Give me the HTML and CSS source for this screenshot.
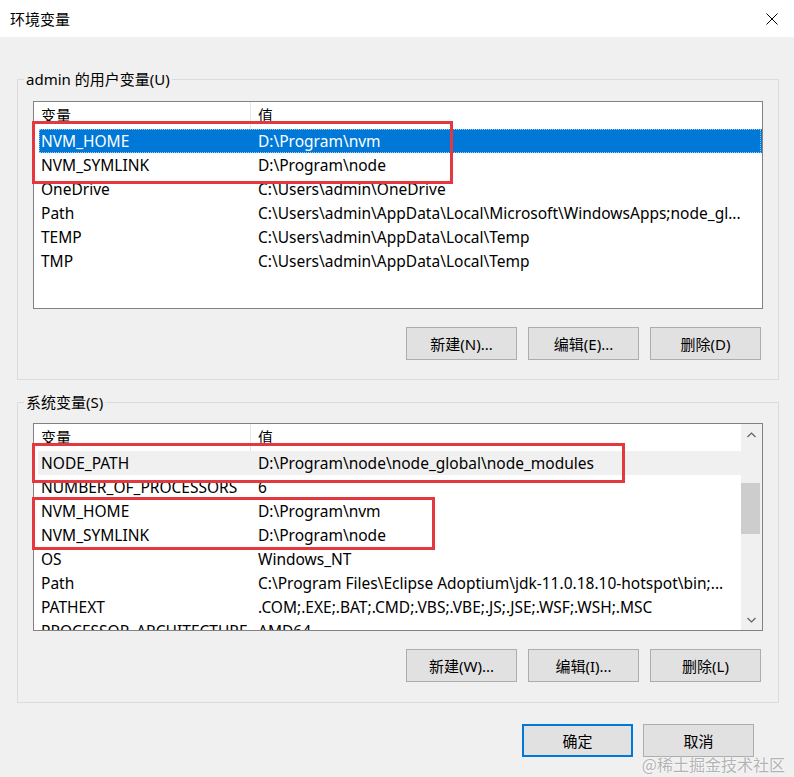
FILE: index.html
```html
<!DOCTYPE html>
<html lang="zh-CN">

<head>
  <meta charset="UTF-8">
  <meta name="viewport" content="width=device-width, initial-scale=1.0">
  <link rel="stylesheet" href="styles.css">
  <title>环境变量</title>
</head>

<body>
  <div class="dialog">
    <header class="titlebar">
      <span class="title">环境变量</span>
      <button class="close" aria-label="关闭">
        <svg width="12" height="12" viewBox="0 0 12 12"><path d="M0.5 0.5 L11.5 11.5 M11.5 0.5 L0.5 11.5" stroke="#000" stroke-width="1" fill="none"/></svg>
      </button>
    </header>

    <main class="body">
      <fieldset class="group group-user">
        <legend>admin 的用户变量(U)</legend>
        <div class="list">
          <div class="view">
            <div class="table">
              <div class="head"><span>变量</span><span>值</span></div>
              <div class="row selected"><span>NVM_HOME</span><span>D:\Program\nvm</span></div>
              <div class="row"><span>NVM_SYMLINK</span><span>D:\Program\node</span></div>
              <div class="row"><span>OneDrive</span><span>C:\Users\admin\OneDrive</span></div>
              <div class="row"><span>Path</span><span>C:\Users\admin\AppData\Local\Microsoft\WindowsApps;node_gl...</span></div>
              <div class="row"><span>TEMP</span><span>C:\Users\admin\AppData\Local\Temp</span></div>
              <div class="row"><span>TMP</span><span>C:\Users\admin\AppData\Local\Temp</span></div>
            </div>
          </div>
          <span class="mark mark-user"></span>
        </div>
        <div class="actions">
          <button class="btn">新建(N)...</button>
          <button class="btn">编辑(E)...</button>
          <button class="btn">删除(D)</button>
        </div>
      </fieldset>

      <fieldset class="group group-system">
        <legend>系统变量(S)</legend>
        <div class="list">
          <div class="view">
            <div class="table">
              <div class="head"><span>变量</span><span>值</span></div>
              <div class="row hover"><span>NODE_PATH</span><span>D:\Program\node\node_global\node_modules</span></div>
              <div class="row"><span>NUMBER_OF_PROCESSORS</span><span>6</span></div>
              <div class="row"><span>NVM_HOME</span><span>D:\Program\nvm</span></div>
              <div class="row"><span>NVM_SYMLINK</span><span>D:\Program\node</span></div>
              <div class="row"><span>OS</span><span>Windows_NT</span></div>
              <div class="row"><span>Path</span><span>C:\Program Files\Eclipse Adoptium\jdk-11.0.18.10-hotspot\bin;...</span></div>
              <div class="row"><span>PATHEXT</span><span>.COM;.EXE;.BAT;.CMD;.VBS;.VBE;.JS;.JSE;.WSF;.WSH;.MSC</span></div>
              <div class="row"><span>PROCESSOR_ARCHITECTURE</span><span>AMD64</span></div>
            </div>
            <div class="scrollbar">
              <span class="sb-btn">
                <svg width="9" height="6" viewBox="0 0 9 6"><path d="M0.5 5 L4.5 1 L8.5 5" stroke="#606060" stroke-width="1.2" fill="none"/></svg>
              </span>
              <span class="sb-track"><span class="sb-thumb"></span></span>
              <span class="sb-btn">
                <svg width="9" height="6" viewBox="0 0 9 6"><path d="M0.5 1 L4.5 5 L8.5 1" stroke="#606060" stroke-width="1.2" fill="none"/></svg>
              </span>
            </div>
          </div>
          <span class="mark mark-path"></span>
          <span class="mark mark-nvm"></span>
        </div>
        <div class="actions">
          <button class="btn">新建(W)...</button>
          <button class="btn">编辑(I)...</button>
          <button class="btn">删除(L)</button>
        </div>
      </fieldset>

      <div class="footer">
        <button class="btn btn-default">确定</button>
        <button class="btn">取消</button>
      </div>
    </main>

    <span class="watermark">@稀土掘金技术社区</span>
  </div>
</body>

</html>
```

FILE: styles.css
```css
* {
  box-sizing: border-box;
}

body {
  margin: 0;
  font-family: "Noto Sans", "Noto Sans CJK SC", sans-serif;
  font-size: 15.5px;
  color: #000;
  background: #f0f0f0;
}

.dialog {
  position: relative;
  width: 794px;
  height: 777px;
  background: #f0f0f0;
  overflow: hidden;
}

.titlebar {
  display: flex;
  align-items: center;
  justify-content: space-between;
  height: 37px;
  padding-inline: 10px 16px;
  background: #fff;
}

.title {
  font-size: 15px;
  line-height: 20px;
}

.close {
  display: flex;
  padding: 0;
  border: 0;
  background: none;
}

.body {
  padding: 32px 15px 0 17px;
}

/* group boxes */

.group {
  margin: 0;
  padding: 12px 15px 19px;
  border: 1px solid #dcdcdc;
}

.group legend {
  margin-left: -9px;
  padding: 0 2px;
  font-size: 15px;
  line-height: 20px;
}

.group-system {
  margin-top: 12px;
  padding-top: 11px;
  padding-bottom: 20px;
}

/* list view */

.list {
  position: relative;
  height: 208px;
  border: 1px solid #828282;
  background: #fff;
}

.view {
  display: flex;
  height: 100%;
  overflow: hidden;
}

.table {
  flex: 1;
  min-width: 0;
}

.head,
.row {
  display: grid;
  grid-template-columns: 217px 1fr;
  white-space: nowrap;
}

.head {
  height: 27px;
  font-size: 15px;
  line-height: 27px;
  align-items: start;
}

.head span:first-child {
  border-right: 1px solid #e5e5e5;
  height: 27px;
}

.head span,
.row span {
  padding-left: 7px;
  overflow: hidden;
}

.row {
  position: relative;
  height: 24px;
  line-height: 24px;
}

.row.selected {
  color: #fff;
  background: linear-gradient(to right, transparent 5px, #0078d7 5px);
}

.row.selected::after {
  content: "";
  position: absolute;
  inset: 0 1px 0 5px;
  border: 1px dotted #9cc8ee;
}

.row.hover {
  background: linear-gradient(to right, transparent 4px, #f0f0f0 4px);
}

.scrollbar {
  display: flex;
  flex-direction: column;
  width: 21px;
  background: #f0f0f0;
}

.sb-btn {
  display: flex;
  align-items: center;
  justify-content: center;
  height: 21px;
}

.sb-track {
  flex: 1;
  padding: 38px 2px 0 0;
}

.sb-thumb {
  display: block;
  height: 51px;
  background: #cdcdcd;
}

/* red highlight boxes */

.mark {
  position: absolute;
  border: 3px solid #e5383e;
}

.mark-user {
  left: -2px;
  top: 19px;
  width: 421px;
  height: 63px;
}

.mark-path {
  left: -2px;
  top: 19px;
  width: 593px;
  height: 40px;
}

.mark-nvm {
  left: -2px;
  top: 73px;
  width: 403px;
  height: 53px;
}

/* buttons */

.actions {
  display: flex;
  justify-content: flex-end;
  gap: 11px;
  margin-top: 18px;
  padding-right: 2px;
}

.btn {
  width: 111px;
  height: 33px;
  padding: 0;
  font: inherit;
  font-size: 15px;
  color: #000;
  background: #e1e1e1;
  border: 1px solid #adadad;
}

.btn-default {
  border: 2px solid #0078d7;
}

.footer {
  display: flex;
  justify-content: flex-end;
  gap: 10px;
  margin-top: 21px;
  padding-right: 25px;
}

.watermark {
  position: absolute;
  right: 9px;
  bottom: 3px;
  font-family: "Noto Sans CJK SC", sans-serif;
  font-size: 16px;
  line-height: 20px;
  color: rgba(110, 110, 110, 0.5);
  text-shadow: 0 0 2px #fff;
}
```
